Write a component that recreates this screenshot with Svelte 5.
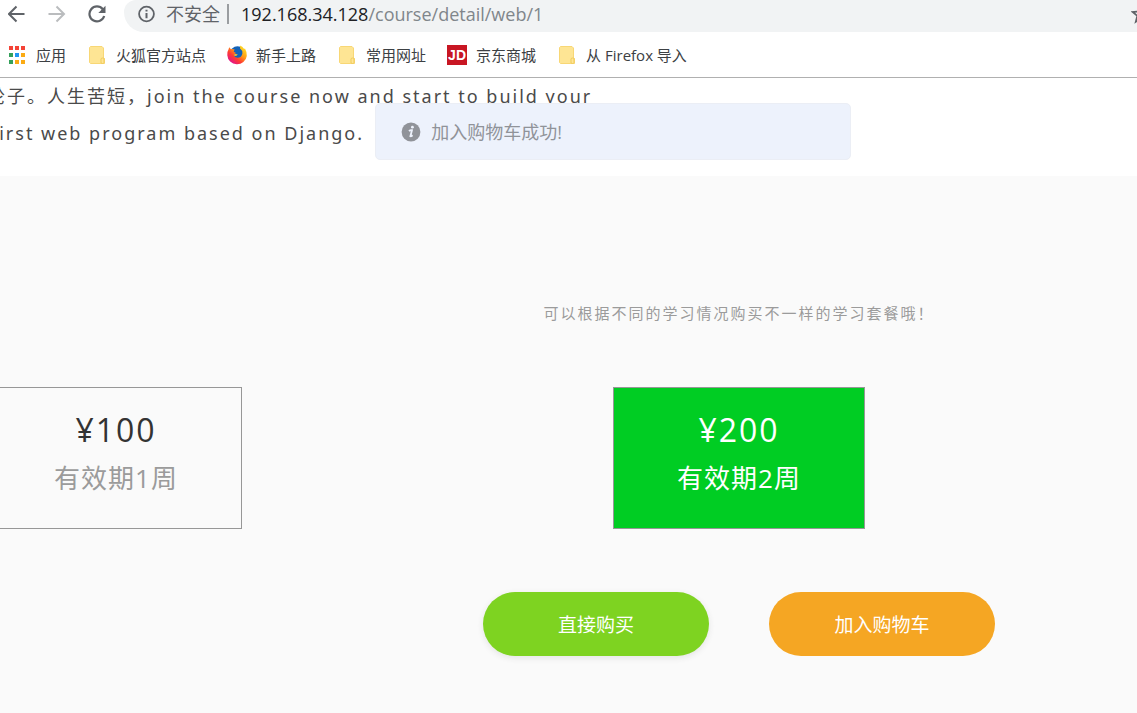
<script lang="ts">
	const host = '192.168.34.128';
	const path = '/course/detail/web/1';

	const bookmarks = [
		{ icon: 'apps', label: '应用' },
		{ icon: 'folder', label: '火狐官方站点' },
		{ icon: 'firefox', label: '新手上路' },
		{ icon: 'folder', label: '常用网址' },
		{ icon: 'jd', label: '京东商城' },
		{ icon: 'folder', label: '从 Firefox 导入' }
	];

	const appColors = [
		'#f44336', '#f44336', '#f44336',
		'#34a05a', '#2196f3', '#fbab14',
		'#34a05a', '#fbab14', '#fbab14'
	];

	const packages = [
		{ id: 1, price: '¥100', validity: '有效期1周' },
		{ id: 2, price: '¥200', validity: '有效期2周' }
	];

	let selected = $state(2);
</script>

<div class="window">
	<header class="browser">
		<div class="toolbar">
			<button class="nav" aria-label="后退">
				<svg width="18" height="18" viewBox="0 0 18 18">
					<path d="M16.5 9H1.5M8.5 1.5L1 9L8.5 16.5" fill="none" stroke="#5f6368" stroke-width="2" />
				</svg>
			</button>
			<button class="nav" aria-label="前进" disabled>
				<svg width="18" height="18" viewBox="0 0 18 18">
					<path d="M0.5 9H15.5M8.5 1.5L16 9L8.5 16.5" fill="none" stroke="#babcbe" stroke-width="2" />
				</svg>
			</button>
			<button class="nav" aria-label="重新加载">
				<svg width="18" height="18" viewBox="0 0 18 18">
					<path
						d="M14.8 4.2A7.5 7.5 0 1 0 16.2 11"
						fill="none"
						stroke="#5f6368"
						stroke-width="2.2"
					/>
					<path d="M17.5 0.8V8H10.3Z" fill="#5f6368" />
				</svg>
			</button>
			<div class="address">
				<svg width="18" height="18" viewBox="0 0 18 18">
					<circle cx="8.5" cy="9" r="7.4" fill="none" stroke="#5f6368" stroke-width="1.8" />
					<path d="M8.5 8V13.2M8.5 4.7V6.6" stroke="#5f6368" stroke-width="2" />
				</svg>
				<span class="security">不安全</span>
				<span class="divider"></span>
				<span class="url"><b>{host}</b>{path}</span>
				<button class="star" aria-label="收藏">
					<svg width="20" height="20" viewBox="0 0 20 20">
						<path
							d="M10 2L12.3 7.6L18.3 8L13.7 11.9L15.2 17.8L10 14.6L4.8 17.8L6.3 11.9L1.7 8L7.7 7.6Z"
							fill="none"
							stroke="#5f6368"
							stroke-width="1.8"
						/>
					</svg>
				</button>
			</div>
		</div>
		<nav class="bookmarks">
			{#each bookmarks as item}
				<a href="#{item.icon}">
					{#if item.icon === 'apps'}
						<svg width="20" height="20" viewBox="0 0 20 20">
							{#each appColors as color, i}
								<rect
									x={2 + (i % 3) * 6}
									y={1 + Math.floor(i / 3) * 7}
									width="4"
									height="4"
									fill={color}
								/>
							{/each}
						</svg>
					{:else if item.icon === 'folder'}
						<svg width="20" height="20" viewBox="0 0 20 20">
							<path
								d="M3.5 1.5H15L16.5 3V12.5L17.5 14V18.5H3.5L2.5 17.5V2.5Z"
								fill="#fee594"
								stroke="#f8d775"
							/>
							<path d="M14 18V14.2Q14 13 15.5 13H17V17.5Q17 18.5 15.5 18.5Z" fill="#fee594" stroke="#f1cb5c" />
						</svg>
					{:else if item.icon === 'firefox'}
						<svg width="20" height="20" viewBox="0 0 20 20">
							<defs>
								<linearGradient id="flame" x1="0.9" y1="0.1" x2="0.2" y2="0.9">
									<stop offset="0" stop-color="#ffe226" />
									<stop offset="0.4" stop-color="#ff9b15" />
									<stop offset="0.7" stop-color="#ff3b31" />
									<stop offset="1" stop-color="#e31587" />
								</linearGradient>
							</defs>
							<circle cx="10.5" cy="8.8" r="7.6" fill="#1262b8" />
							<path
								d="M1.6 4.2L2.2 2.2L4 4.2Q6 3.6 7.6 4.6L6.7 6.8L9 8L7.2 9.4Q7 12 9.6 12.6Q14.6 13 15.4 8.4Q15.5 5.3 13 3.6L13.2 0.4Q16 1.6 17 4L18 3.6Q20 7 19.8 11A9.8 9.4 0 0 1 0.3 10.2Q0 6.6 1.6 4.2Z"
								fill="url(#flame)"
							/>
							<path d="M7 9.6Q8.6 8.4 10.8 9.5Q9.8 11 7.5 11Z" fill="#ffbd24" />
						</svg>
					{:else}
						<span class="jd">JD</span>
					{/if}
					<span>{item.label}</span>
				</a>
			{/each}
		</nav>
	</header>

	<main>
		<section class="intro">
			<p>轮子。人生苦短，join the course now and start to build your<br />first web program based on Django.</p>
			<div class="toast" role="status">
				<svg width="20" height="20" viewBox="0 0 20 20">
					<circle cx="10" cy="10" r="9.4" fill="#909399" />
					<circle cx="11.4" cy="5.2" r="1.4" fill="#edf2fc" />
					<path
						d="M8 9.2Q9.4 7.8 11 8.2L9.4 14.2Q10.2 14.4 11.6 13.2"
						fill="none"
						stroke="#edf2fc"
						stroke-width="1.8"
					/>
				</svg>
				<span>加入购物车成功!</span>
			</div>
		</section>

		<section class="purchase">
			<p class="tip">可以根据不同的学习情况购买不一样的学习套餐哦！</p>
			<div class="packages">
				{#each packages as item}
					<button
						class="package"
						class:active={selected === item.id}
						onclick={() => (selected = item.id)}
					>
						<span class="price">{item.price}</span>
						<span class="validity">{item.validity}</span>
					</button>
				{/each}
			</div>
			<div class="actions">
				<button class="buy">直接购买</button>
				<button class="cart">加入购物车</button>
			</div>
		</section>
	</main>
</div>

<style>
	:global(body) {
		margin: 0;
		background: #fafafa;
	}

	.window {
		min-height: 100vh;
		overflow: hidden;
		font-family: 'Open Sans', 'Noto Sans CJK SC', sans-serif;
		background: #fafafa;
	}

	button {
		margin: 0;
		padding: 0;
		border: 0;
		background: none;
		font: inherit;
		cursor: pointer;
	}

	svg {
		display: block;
		flex: none;
	}

	p {
		margin: 0;
	}

	.browser {
		background: #fff;
		border-bottom: 1px solid #b0b0b0;
	}

	.toolbar {
		display: flex;
		align-items: center;
		height: 32px;
		padding-left: 8px;
	}

	.nav {
		width: 18px;
		margin-right: 22px;
		padding-bottom: 4px;
	}

	.address {
		display: flex;
		flex: 1;
		align-items: center;
		box-sizing: border-box;
		height: 32px;
		margin-left: -4px;
		padding: 0 0 4px 14px;
		border-radius: 12px 0 0 20px;
		background: #f1f3f4;
		font-size: 18px;
		line-height: 28px;
		color: #80868b;
		white-space: nowrap;
	}

	.security {
		margin-left: 10px;
		color: #5f6368;
	}

	.divider {
		width: 2px;
		height: 20px;
		margin: 0 12px 0 7px;
		background: #9a9da0;
	}

	.url b {
		font-weight: 400;
		color: #202124;
	}

	.star {
		margin: 0 -14px 0 auto;
	}

	.bookmarks {
		display: flex;
		align-items: center;
		gap: 21px;
		height: 45px;
		padding-left: 7px;
	}

	.bookmarks a {
		display: flex;
		align-items: center;
		gap: 9px;
		font-size: 15px;
		line-height: 20px;
		color: #3c4043;
		text-decoration: none;
		white-space: nowrap;
	}

	.jd {
		width: 20px;
		background: #c81623;
		color: #fff;
		font-family: 'Liberation Sans', sans-serif;
		font-size: 14px;
		font-weight: 700;
		line-height: 20px;
		text-align: center;
	}

	.intro {
		position: relative;
		padding-bottom: 24px;
		background: #fff;
	}

	.intro p {
		margin-left: -9px;
		font-family: 'Noto Sans', 'Noto Sans CJK SC', sans-serif;
		font-size: 18px;
		line-height: 37px;
		letter-spacing: 2px;
		text-indent: -4px;
		color: #4a4a4a;
		white-space: nowrap;
	}

	.toast {
		position: absolute;
		top: 25px;
		left: 33%;
		display: flex;
		align-items: center;
		gap: 10px;
		box-sizing: border-box;
		width: 476px;
		height: 57px;
		padding-left: 25px;
		border: 1px solid #ebeef5;
		border-radius: 5px;
		background: #edf2fc;
		font-size: 18px;
		line-height: 20px;
		color: #909399;
	}

	.purchase {
		padding-top: 124px;
	}

	.tip {
		padding-left: 341px;
		font-size: 15px;
		line-height: 26px;
		letter-spacing: 2px;
		text-align: center;
		color: #9b9b9b;
	}

	.packages {
		display: flex;
		gap: 371px;
		margin: 61px 0 0 -10px;
	}

	.package {
		display: flex;
		flex: none;
		flex-direction: column;
		align-items: center;
		box-sizing: border-box;
		width: 252px;
		height: 142px;
		padding-top: 18px;
		border: 1px solid #979797;
		color: #9b9b9b;
	}

	.price {
		font-size: 32px;
		line-height: 48px;
		letter-spacing: 2px;
		color: #333;
	}

	.validity {
		font-size: 26px;
		line-height: 48px;
		letter-spacing: 1px;
	}

	.active,
	.active .price {
		color: #fff;
	}

	.active {
		background: #00cd23;
	}

	.actions {
		display: flex;
		justify-content: center;
		gap: 60px;
		margin-top: 63px;
		padding-left: 341px;
	}

	.actions button {
		width: 226px;
		height: 64px;
		border-radius: 32px;
		color: #fff;
		font-size: 19px;
	}

	.actions .buy {
		background: #7ed321;
		box-shadow: 0 2px 6px #e4e4e4;
	}

	.actions .cart {
		background: #f5a623;
	}
</style>
